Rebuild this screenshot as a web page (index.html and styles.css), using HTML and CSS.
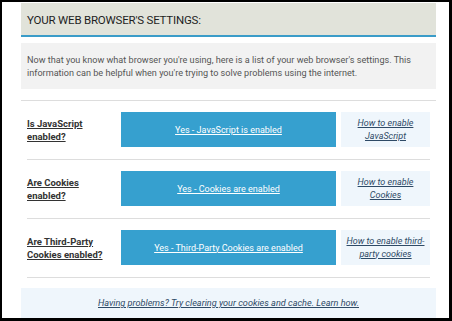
FILE: index.html
```html
<!DOCTYPE html>
<html>
<head>
<meta charset="utf-8">
<link rel="stylesheet" href="styles.css">
</head>
<body>
<div class="frame">
  <div class="header">YOUR WEB BROWSER'S SETTINGS:</div>
  <div class="intro">Now that you know what browser you're using, here is a list of your web browser's settings. This information can be helpful when you're trying to solve problems using the internet.</div>
  <div class="rows">
    <div class="row">
      <div class="label"><a>Is JavaScript enabled?</a></div>
      <div class="status"><a>Yes - JavaScript is enabled</a></div>
      <div class="help"><a>How to enable JavaScript</a></div>
    </div>
    <div class="row">
      <div class="label"><a>Are Cookies enabled?</a></div>
      <div class="status"><a>Yes - Cookies are enabled</a></div>
      <div class="help"><a>How to enable Cookies</a></div>
    </div>
    <div class="row">
      <div class="label"><a>Are Third-Party Cookies enabled?</a></div>
      <div class="status"><a>Yes - Third-Party Cookies are enabled</a></div>
      <div class="help"><a>How to enable third-party cookies</a></div>
    </div>
  </div>
  <div class="footer"><a>Having problems? Try clearing your cookies and cache. Learn how.</a></div>
</div>
</body>
</html>
```
FILE: styles.css
```css
html, body { margin: 0; padding: 0; background: #fff; }
body { font-family: Roboto, "Liberation Sans", sans-serif; font-size: 10px; color: #444; }
.frame {
  width: 452px; height: 321px; box-sizing: border-box;
  border-style: solid; border-color: #000;
  border-width: 2px 3px 3px 2px;
  padding: 1px 13px 0 19px;
  overflow: hidden;
}
.header {
  height: 31px; background: #e1e3da; border-bottom: 2px solid #3a9cc8;
  display: flex; align-items: center; padding-left: 6px; padding-top: 1px; box-sizing: content-box;
  font-size: 11.5px; letter-spacing: -0.2px; color: #1e1e1e;
}
.intro {
  margin-top: 6px; height: 46px; box-sizing: border-box; background: #f2f2f2;
  padding: 11px 6px 0 6px; line-height: 12.5px; font-size: 9.1px; color: #555;
}
.rows { margin-top: 11px; border-top: 1px solid #ddd; }
.row {
  margin: 0 6px; border-bottom: 1px solid #ddd;
  display: flex; padding: 11px 0 12px; height: 35px;
}
.label {
  width: 94px; box-sizing: border-box; padding-right: 10px;
  font-weight: 700; font-size: 9.5px; line-height: 13px; align-self: center;
}
.label a { color: #333; text-decoration: underline; }
.status {
  width: 215px; background: #36a0cf; display: flex; align-items: center; justify-content: center;
}
.status a { color: #fff; text-decoration: underline; font-size: 9px; }
.help {
  width: 89px; box-sizing: border-box; margin-left: 5px; background: #eff6fc;
  display: flex; align-items: center; justify-content: center; text-align: center;
  font-style: italic; font-size: 9px; line-height: 13px; padding: 0 2px;
}
.help a { color: #2e4a66; text-decoration: underline; }
.footer {
  margin-top: 10px; height: 30px; background: #eff6fc; display: flex; align-items: center; justify-content: center;
  font-style: italic; font-size: 9.15px;
}
.footer a { color: #2e4a66; text-decoration: underline; }
```
